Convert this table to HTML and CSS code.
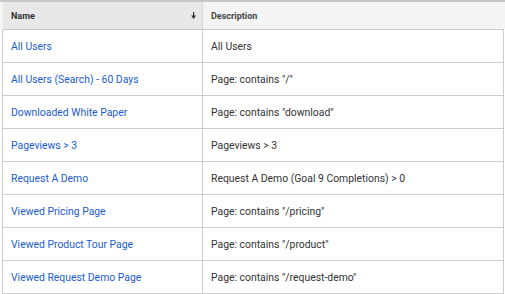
FILE: index.html
```html
<!DOCTYPE html>
<html lang="en">
<head>
    <meta charset="UTF-8">
    <meta name="viewport" content="width=device-width, initial-scale=1.0">
    <title>Segments</title>
    <link rel="stylesheet" href="styles.css">
</head>
<body>
    <div class="table-wrap">
        <table class="segments">
            <thead>
                <tr>
                    <th class="sorted">
                        <div class="th-inner">
                            <span>Name</span>
                            <svg class="sort-icon" width="5" height="7" viewBox="0 0 5 7">
                                <rect x="2" y="0" width="1.2" height="4.5" fill="#333"/>
                                <polygon points="0,3.6 5,3.6 2.6,7" fill="#333"/>
                            </svg>
                        </div>
                    </th>
                    <th>Description</th>
                </tr>
            </thead>
            <tbody>
                <tr>
                    <td><a href="#">All Users</a></td>
                    <td>All Users</td>
                </tr>
                <tr>
                    <td><a href="#">All Users (Search) - 60 Days</a></td>
                    <td>Page: contains "/"</td>
                </tr>
                <tr>
                    <td><a href="#">Downloaded White Paper</a></td>
                    <td>Page: contains "download"</td>
                </tr>
                <tr>
                    <td><a href="#">Pageviews &gt; 3</a></td>
                    <td>Pageviews &gt; 3</td>
                </tr>
                <tr>
                    <td><a href="#">Request A Demo</a></td>
                    <td>Request A Demo (Goal 9 Completions) &gt; 0</td>
                </tr>
                <tr>
                    <td><a href="#">Viewed Pricing Page</a></td>
                    <td>Page: contains "/pricing"</td>
                </tr>
                <tr>
                    <td><a href="#">Viewed Product Tour Page</a></td>
                    <td>Page: contains "/product"</td>
                </tr>
                <tr>
                    <td><a href="#">Viewed Request Demo Page</a></td>
                    <td>Page: contains "/request-demo"</td>
                </tr>
            </tbody>
        </table>
    </div>
</body>
</html>
```

FILE: styles.css
```css
* {
    margin: 0;
    padding: 0;
    box-sizing: border-box;
}

body {
    font-family: Roboto, 'Liberation Sans', sans-serif;
    background: #fff;
    color: #333;
}

.table-wrap {
    border-top: 2px solid #c8c8c8;
    background: linear-gradient(#f4f4f4 0, #f4f4f4 27px, #fff 27px);
}

.segments {
    margin-left: 2px;
    width: 502px;
    border-collapse: separate;
    border-spacing: 0;
    table-layout: fixed;
}

.segments th {
    height: 28px;
    padding: 0 8px;
    font-size: 9px;
    font-weight: 700;
    color: #444;
    text-align: left;
    background: #f4f4f4;
    border-bottom: 1px solid #c8c8c8;
}

.segments th.sorted {
    width: 201px;
    background: #e8e8e8;
    border-left: 1px solid #f6f6f6;
    border-right: 1px solid #d8d8d8;
    color: #333;
}

.th-inner {
    display: flex;
    align-items: center;
    justify-content: space-between;
}

.sort-icon {
    margin-right: -2px;
}

.segments td {
    height: 33px;
    padding: 0 8px;
    font-size: 10.4px;
    border-bottom: 1px solid #cccccc;
    border-right: 1px solid #cccccc;
    white-space: nowrap;
}

.segments td:first-child {
    border-left: 1px solid #cccccc;
}

.segments a {
    color: #1a5ccf;
    text-decoration: none;
}
```
